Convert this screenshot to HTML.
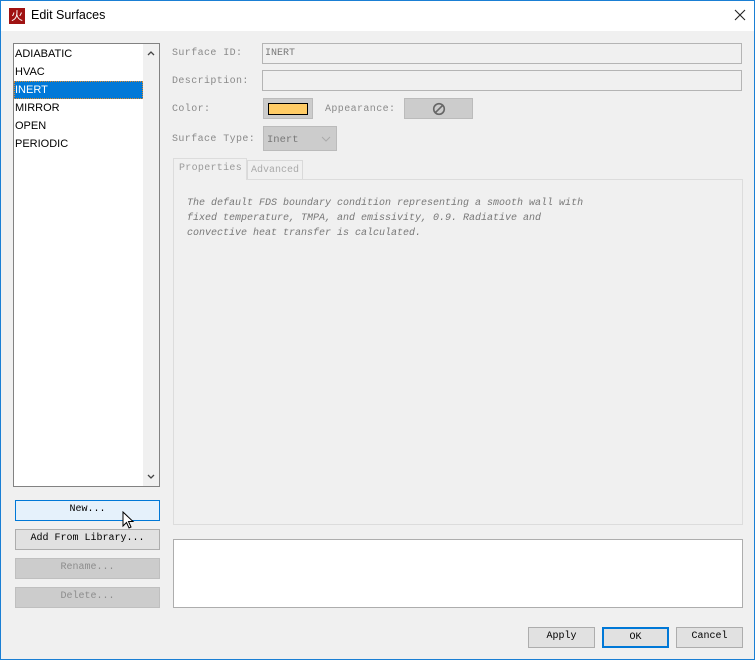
<!DOCTYPE html><html><head><style>
*{box-sizing:border-box;margin:0;padding:0}
body{width:755px;height:660px;background:#f0f0f0;position:relative;overflow:hidden;font-family:"Liberation Mono","Noto Serif CJK SC",monospace;font-size:10px}
.win{position:absolute;left:0;top:0;width:755px;height:660px;border:1px solid #1a7fd4;}
.title{position:absolute;left:0;top:0;width:753px;height:30px;background:#fff}
.a{position:absolute}
.lbl{position:absolute;color:#8a8a8a;font-size:10px;letter-spacing:.4px}
.field{position:absolute;border:1px solid #b4b4b4;background:#f0f0f0}
.btn{position:absolute;border:1px solid #adadad;background:#e1e1e1;text-align:center;line-height:18px;color:#000;font-size:10px}
.dis{background:#ccc;border-color:#bfbfbf;color:#8d8d8d}
.li{position:absolute;left:0;width:129px;height:18px;line-height:18px;font-family:"Liberation Sans",sans-serif;font-size:11px;padding-left:1px}
</style></head><body><div class="win">
<div class="title">
<div class="a" style="left:8px;top:7px;width:16px;height:16px;background:#a01212;color:#fff;font-size:12px;line-height:16px;text-align:center;font-family:'Noto Sans CJK SC',sans-serif">火</div>
<div class="a" style="left:30px;top:7px;font-family:'Liberation Sans',sans-serif;font-size:12.5px;color:#000">Edit Surfaces</div>
<svg class="a" style="left:733px;top:8px" width="12" height="12"><path d="M1 1L11 11M11 1L1 11" stroke="#222" stroke-width="1.1"/></svg>
</div>
<div class="a" style="left:12px;top:42px;width:147px;height:444px;border:1px solid #828282;background:#fff">
<div class="a" style="right:0;top:0;width:16px;height:442px;background:#f0f0f0"></div>
<svg class="a" style="right:4px;top:6px" width="8" height="6"><path d="M1 5L4 2L7 5" stroke="#444" stroke-width="1.3" fill="none"/></svg>
<svg class="a" style="right:4px;bottom:6px" width="8" height="6"><path d="M1 1L4 4L7 1" stroke="#444" stroke-width="1.3" fill="none"/></svg>
<div class="li" style="top:1px">ADIABATIC</div>
<div class="li" style="top:19px">HVAC</div>
<div class="li" style="top:37px;background:#0078d7;color:#fff;outline:1px dotted #e08a2a;outline-offset:-1px">INERT</div>
<div class="li" style="top:55px">MIRROR</div>
<div class="li" style="top:73px">OPEN</div>
<div class="li" style="top:91px">PERIODIC</div>
</div>
<div class="lbl" style="left:171px;top:47px">Surface ID:</div>
<div class="field" style="left:261px;top:42px;width:480px;height:21px;color:#777;padding:4px 2px">INERT</div>
<div class="lbl" style="left:171px;top:75px">Description:</div>
<div class="field" style="left:261px;top:69px;width:480px;height:21px"></div>
<div class="lbl" style="left:171px;top:103px">Color:</div>
<div class="a" style="left:262px;top:97px;width:50px;height:21px;background:#ccc;border:1px solid #bbb"><div class="a" style="left:4px;top:4px;width:40px;height:12px;background:#ffcc66;border:1px solid #000"></div></div>
<div class="lbl" style="left:324px;top:103px">Appearance:</div>
<div class="a" style="left:403px;top:97px;width:69px;height:21px;background:#ccc;border:1px solid #bbb"><svg class="a" style="left:27px;top:3px" width="14" height="14"><circle cx="7" cy="7" r="5.3" stroke="#666" stroke-width="1.6" fill="none"/><path d="M3.3 10.7L10.7 3.3" stroke="#666" stroke-width="1.6"/></svg></div>
<div class="lbl" style="left:171px;top:133px">Surface Type:</div>
<div class="a" style="left:262px;top:125px;width:74px;height:25px;background:#ccc;border:1px solid #bbb;color:#777;padding:7px 3px;font-size:10.5px">Inert<svg class="a" style="right:5px;top:9px" width="10" height="6"><path d="M1 1L5 5L9 1" stroke="#aaa" fill="none"/></svg></div>
<div class="a" style="left:172px;top:178px;width:570px;height:346px;border:1px solid #dcdcdc;background:#f0f0f0"></div>
<div class="a" style="left:172px;top:157px;width:74px;height:22px;background:#f0f0f0;border:1px solid #dcdcdc;border-bottom:none;color:#9a9a9a;padding:4px 5px;font-size:10px;letter-spacing:.3px">Properties</div>
<div class="a" style="left:246px;top:159px;width:56px;height:19px;border:1px solid #d9d9d9;border-bottom:none;color:#aaa;padding:4px 3px;font-size:10px">Advanced</div>
<div class="a" style="left:186px;top:195px;color:#777;font-style:italic;line-height:15px;font-size:10px;white-space:pre">The default FDS boundary condition representing a smooth wall with
fixed temperature, TMPA, and emissivity, 0.9. Radiative and
convective heat transfer is calculated.</div>
<div class="a" style="left:172px;top:538px;width:570px;height:69px;border:1px solid #adadad;background:#fff"></div>
<div class="btn" style="left:14px;top:499px;width:145px;height:21px;background:#e5f1fb;border-color:#0078d7">New...</div>
<svg class="a" style="left:121px;top:510px" width="14" height="20"><path d="M1 1L1 15L4.5 11.5L7 17L9 16L6.5 10.5L11 10.5Z" fill="#fff" stroke="#000" stroke-width="1"/></svg>
<div class="btn" style="left:14px;top:528px;width:145px;height:21px">Add From Library...</div>
<div class="btn dis" style="left:14px;top:557px;width:145px;height:21px">Rename...</div>
<div class="btn dis" style="left:14px;top:586px;width:145px;height:21px">Delete...</div>
<div class="btn" style="left:527px;top:626px;width:67px;height:21px">Apply</div>
<div class="btn" style="left:601px;top:626px;width:67px;height:21px;border:2px solid #0078d7;line-height:17px">OK</div>
<div class="btn" style="left:675px;top:626px;width:67px;height:21px">Cancel</div>
</div></body></html>
